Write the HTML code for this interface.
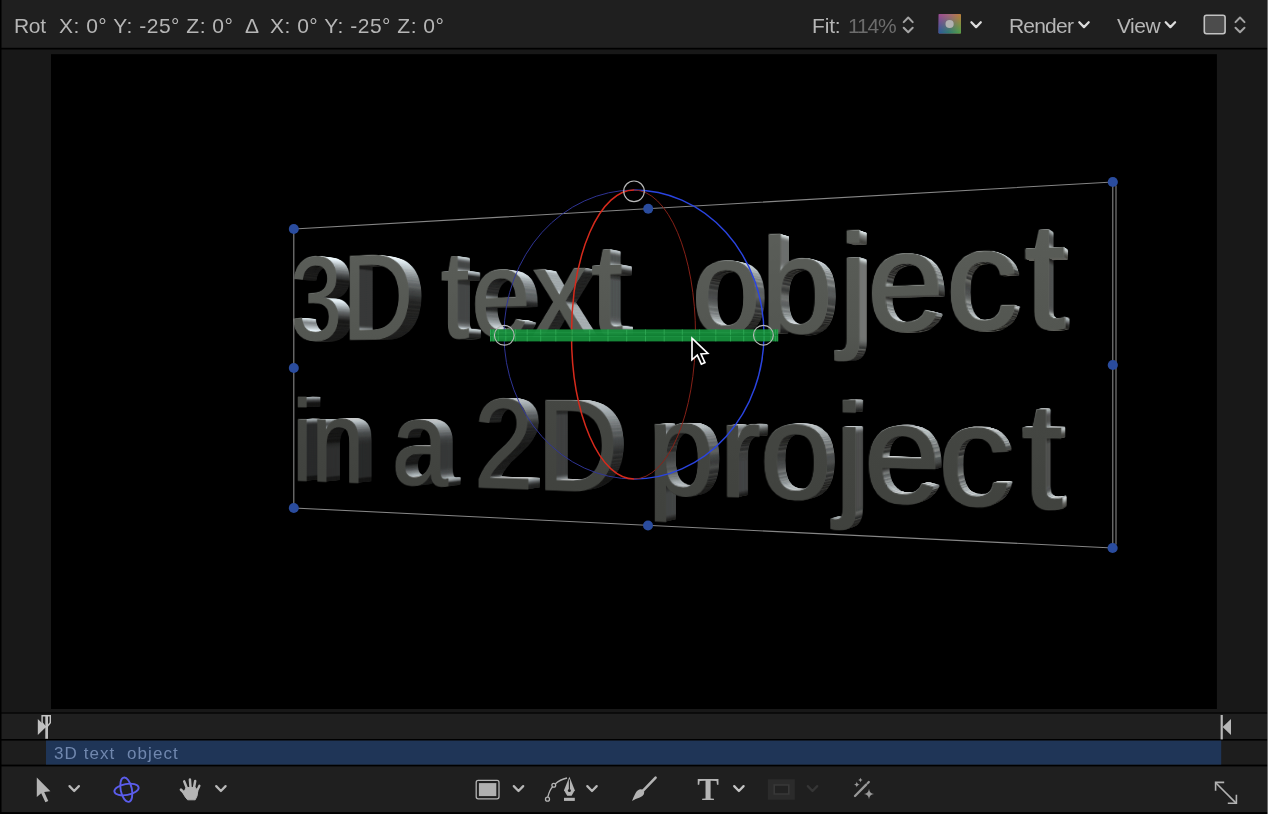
<!DOCTYPE html>
<html><head><meta charset="utf-8"><title>Canvas</title>
<style>
*{box-sizing:border-box;margin:0;padding:0}
html,body{width:1270px;height:814px;overflow:hidden;background:#000;font-family:"Liberation Sans",sans-serif}
#root{position:absolute;left:0;top:0;width:1270px;height:814px;background:#000;overflow:hidden}
#bar{position:absolute;left:46px;top:741px;width:1175px;height:24px;will-change:transform;transform:translateZ(0)}
#bar span{position:absolute;left:8px;top:3.2px;font-size:17px;line-height:20px;color:#7087ae;white-space:pre;letter-spacing:1.08px}
.tt{position:absolute;top:14.2px;font-size:21px;line-height:24px;color:#b6b6b6;white-space:pre;will-change:transform;transform:translateZ(0)}
/* 3D text */
#stage{position:absolute;left:0;top:0;width:1270px;height:814px}
.ly{position:absolute;left:0;top:0;width:1270px;height:814px;overflow:visible;transform-origin:634px 382px}
svg{position:absolute;left:0;top:0;overflow:visible}

</style></head>
<body>
<div id="root">
<svg id="bg" width="1270" height="814" viewBox="0 0 1270 814">
 <rect x="0" y="0" width="1270" height="814" fill="#000"/>
 <rect x="1.5" y="0" width="1266.1" height="47.8" fill="#1f1f1f"/>
 <rect x="1.5" y="49.5" width="1266.1" height="662.9" fill="#181818"/>
 <rect x="1.5" y="712.4" width="1266.1" height="1.6" fill="#0c0c0c"/>
 <rect x="51" y="54.2" width="1165.9" height="654.8" fill="#000"/>
 <rect x="1.5" y="714" width="1266.1" height="25" fill="#1f1f1f"/>
 <rect x="1.5" y="740.6" width="1266.1" height="24" fill="#1d1d1d"/>
 <rect x="46" y="740.6" width="1175.2" height="24" fill="#1f3557"/>
 <rect x="1.5" y="766.4" width="1266.1" height="45.7" fill="#1f1f1f"/>
 <rect x="1267.6" y="0" width="2.4" height="814" fill="#fff"/>
</svg>
<div id="stage">
<svg width="0" height="0" style="position:absolute"><defs>
<g id="w1" font-family="Liberation Sans, sans-serif" font-size="130"><text x="204.4 276.9" y="335.0" transform="translate(0 335.0) scale(1 1.028) translate(0 -335.0)">3D</text><text x="405.5" y="335.0" transform="translate(0 335.0) scale(1 1.032) translate(0 -335.0)">t</text><text x="443.7 517.0" y="335.0">ex</text><text x="585.8" y="335.0" transform="translate(0 335.0) scale(1 1.032) translate(0 -335.0)">t</text><text x="696.0 767.7 844.7 872.1 944.8" y="335.0">objec</text><text x="1013.9" y="335.0" transform="translate(0 335.0) scale(1 1.032) translate(0 -335.0)">t</text><text x="207.5 234.6" y="492.7">in</text><text x="342.7" y="492.7">a</text><text x="447.0 523.0" y="492.7" transform="translate(0 492.7) scale(1 1.028) translate(0 -492.7)">2D</text><text x="648.6 725.1 766.8 841.1 869.0 938.1" y="492.7">projec</text><text x="1011.8" y="492.7" transform="translate(0 492.7) scale(1 1.032) translate(0 -492.7)">t</text></g>
<linearGradient id="amb" gradientUnits="userSpaceOnUse" x1="204" y1="0" x2="1064" y2="0">
 <stop offset="0" stop-color="#1e1e1d"/><stop offset=".45" stop-color="#2c2c2a"/><stop offset=".75" stop-color="#4c4c48"/><stop offset="1" stop-color="#62625c"/></linearGradient>
<filter id="ltA" filterUnits="userSpaceOnUse" x="196" y="222" width="884" height="316" color-interpolation-filters="sRGB">
 <feGaussianBlur in="SourceAlpha" stdDeviation="2.3" result="b"/>
 <feDiffuseLighting in="b" surfaceScale="8.5" diffuseConstant="1.4" lighting-color="#a6afb4" result="d"><feDistantLight azimuth="274" elevation="8"/></feDiffuseLighting>
 <feComposite in="d" in2="SourceGraphic" operator="arithmetic" k1="0" k2="1" k3="1" k4="0" result="sum"/>
 <feComposite in="sum" in2="SourceAlpha" operator="in"/>
</filter>
<filter id="ltB" filterUnits="userSpaceOnUse" x="322" y="222" width="758" height="316" color-interpolation-filters="sRGB">
 <feGaussianBlur in="SourceAlpha" stdDeviation="2.3" result="b"/>
 <feDiffuseLighting in="b" surfaceScale="8.5" diffuseConstant="1" lighting-color="#a3acb1" result="d"><feDistantLight azimuth="282" elevation="36"/></feDiffuseLighting>
 <feComposite in="d" in2="SourceGraphic" operator="arithmetic" k1="0" k2="1" k3="1" k4="0" result="sum"/>
 <feComposite in="sum" in2="SourceAlpha" operator="in"/>
</filter>
<g id="sideA" filter="url(#ltA)"><use href="#w1" fill="url(#amb)"/></g>
<linearGradient id="ambB" gradientUnits="userSpaceOnUse" x1="204" y1="0" x2="1064" y2="0">
 <stop offset="0" stop-color="#222" stop-opacity="0"/><stop offset=".1465" stop-color="#242423" stop-opacity="0"/><stop offset=".45" stop-color="#2c2c2a" stop-opacity=".49"/><stop offset=".75" stop-color="#4c4c48" stop-opacity=".98"/><stop offset=".77" stop-color="#4e4e4a" stop-opacity="1"/><stop offset="1" stop-color="#62625c" stop-opacity="1"/></linearGradient>
<g id="sideB" filter="url(#ltB)"><use href="#w1" fill="url(#ambB)"/></g>
<g id="side"><use href="#sideA"/><use href="#sideB"/><use href="#w1" fill="url(#vdk)"/></g>
<linearGradient id="fg" gradientUnits="userSpaceOnUse" x1="0" y1="230" x2="0" y2="530">
 <stop offset="0" stop-color="#5b5e59"/><stop offset=".36" stop-color="#535651"/><stop offset=".48" stop-color="#4c4e4a"/><stop offset=".56" stop-color="#454743"/><stop offset="1" stop-color="#3f413d"/></linearGradient>
<linearGradient id="vdk" gradientUnits="userSpaceOnUse" x1="0" y1="230" x2="0" y2="530">
 <stop offset="0" stop-color="#000" stop-opacity="0"/><stop offset=".40" stop-color="#000" stop-opacity="0"/><stop offset=".56" stop-color="#000" stop-opacity=".22"/><stop offset="1" stop-color="#000" stop-opacity=".26"/></linearGradient>
<g id="face"><use href="#w1" fill="url(#fg)" stroke="url(#fg)" stroke-width="1" stroke-linejoin="round"/></g>
</defs></svg>
<svg class="ly" width="1270" height="814" style="transform:perspective(1385.5px) rotateY(-25deg) translateZ(-25px)"><use href="#side"/></svg>
<svg class="ly" width="1270" height="814" style="transform:perspective(1385.5px) rotateY(-25deg) translateZ(-24px)"><use href="#side"/></svg>
<svg class="ly" width="1270" height="814" style="transform:perspective(1385.5px) rotateY(-25deg) translateZ(-23px)"><use href="#side"/></svg>
<svg class="ly" width="1270" height="814" style="transform:perspective(1385.5px) rotateY(-25deg) translateZ(-22px)"><use href="#side"/></svg>
<svg class="ly" width="1270" height="814" style="transform:perspective(1385.5px) rotateY(-25deg) translateZ(-21px)"><use href="#side"/></svg>
<svg class="ly" width="1270" height="814" style="transform:perspective(1385.5px) rotateY(-25deg) translateZ(-20px)"><use href="#side"/></svg>
<svg class="ly" width="1270" height="814" style="transform:perspective(1385.5px) rotateY(-25deg) translateZ(-19px)"><use href="#side"/></svg>
<svg class="ly" width="1270" height="814" style="transform:perspective(1385.5px) rotateY(-25deg) translateZ(-18px)"><use href="#side"/></svg>
<svg class="ly" width="1270" height="814" style="transform:perspective(1385.5px) rotateY(-25deg) translateZ(-17px)"><use href="#side"/></svg>
<svg class="ly" width="1270" height="814" style="transform:perspective(1385.5px) rotateY(-25deg) translateZ(-16px)"><use href="#side"/></svg>
<svg class="ly" width="1270" height="814" style="transform:perspective(1385.5px) rotateY(-25deg) translateZ(-15px)"><use href="#side"/></svg>
<svg class="ly" width="1270" height="814" style="transform:perspective(1385.5px) rotateY(-25deg) translateZ(-14px)"><use href="#side"/></svg>
<svg class="ly" width="1270" height="814" style="transform:perspective(1385.5px) rotateY(-25deg) translateZ(-13px)"><use href="#side"/></svg>
<svg class="ly" width="1270" height="814" style="transform:perspective(1385.5px) rotateY(-25deg) translateZ(-12px)"><use href="#side"/></svg>
<svg class="ly" width="1270" height="814" style="transform:perspective(1385.5px) rotateY(-25deg) translateZ(-11px)"><use href="#side"/></svg>
<svg class="ly" width="1270" height="814" style="transform:perspective(1385.5px) rotateY(-25deg) translateZ(-10px)"><use href="#side"/></svg>
<svg class="ly" width="1270" height="814" style="transform:perspective(1385.5px) rotateY(-25deg) translateZ(-9px)"><use href="#side"/></svg>
<svg class="ly" width="1270" height="814" style="transform:perspective(1385.5px) rotateY(-25deg) translateZ(-8px)"><use href="#side"/></svg>
<svg class="ly" width="1270" height="814" style="transform:perspective(1385.5px) rotateY(-25deg) translateZ(-7px)"><use href="#side"/></svg>
<svg class="ly" width="1270" height="814" style="transform:perspective(1385.5px) rotateY(-25deg) translateZ(-6px)"><use href="#side"/></svg>
<svg class="ly" width="1270" height="814" style="transform:perspective(1385.5px) rotateY(-25deg) translateZ(-5px)"><use href="#side"/></svg>
<svg class="ly" width="1270" height="814" style="transform:perspective(1385.5px) rotateY(-25deg) translateZ(-4px)"><use href="#side"/></svg>
<svg class="ly" width="1270" height="814" style="transform:perspective(1385.5px) rotateY(-25deg) translateZ(-3px)"><use href="#side"/></svg>
<svg class="ly" width="1270" height="814" style="transform:perspective(1385.5px) rotateY(-25deg) translateZ(-2px)"><use href="#side"/></svg>
<svg class="ly" width="1270" height="814" style="transform:perspective(1385.5px) rotateY(-25deg) translateZ(-1px)"><use href="#side"/></svg>
<svg class="ly" width="1270" height="814" style="transform:perspective(1385.5px) rotateY(-25deg) translateZ(0px)"><use href="#face"/></svg>
</div>
<div id="bar"><span>3D text  object</span></div>

<!-- top bar text -->
<span class="tt" style="left:14.4px;letter-spacing:-.3px">Rot</span>
<span class="tt" style="left:59px;letter-spacing:.5px">X: 0° Y: -25° Z: 0°</span>
<span class="tt" style="left:245px;letter-spacing:-1px">Δ</span>
<span class="tt" style="left:270px;letter-spacing:.5px">X: 0° Y: -25° Z: 0°</span>
<span class="tt" style="left:811.5px;letter-spacing:-.17px">Fit:</span>
<span class="tt" style="left:847.5px;letter-spacing:-1.16px;color:#6c6c6c">114%</span>
<span class="tt" style="left:1008.5px;letter-spacing:-.8px">Render</span>
<span class="tt" style="left:1116.5px;letter-spacing:-.53px">View</span>

<svg id="ui" width="1270" height="814" viewBox="0 0 1270 814">
<defs>
 <path id="chev" d="M-4.7-2.5 L0 2.4 L4.7-2.5" fill="none" stroke-width="2.25" stroke-linecap="round" stroke-linejoin="round"/>
 <g id="updn" fill="none" stroke-width="2" stroke-linecap="round" stroke-linejoin="round"><path d="M-4.5-2.8 L0-7.4 L4.5-2.8"/><path d="M-4.5 2.8 L0 7.4 L4.5 2.8"/></g>
 <linearGradient id="swt" x1="0" y1="0" x2="1" y2="0"><stop offset="0" stop-color="#9a4a92"/><stop offset=".45" stop-color="#a0667a"/><stop offset="1" stop-color="#b8803a"/></linearGradient>
 <linearGradient id="swb" x1="0" y1="0" x2="1" y2="0"><stop offset="0" stop-color="#2a5c9a"/><stop offset=".45" stop-color="#2e7a72"/><stop offset="1" stop-color="#52a048"/></linearGradient>
 <linearGradient id="swf" x1="0" y1="0" x2="0" y2="1"><stop offset="0.1" stop-color="#fff" stop-opacity="0"/><stop offset=".9" stop-color="#fff" stop-opacity="1"/></linearGradient>
 <mask id="swm"><rect x="938" y="13" width="24" height="22" fill="url(#swf)"/></mask>
</defs>

<!-- top bar icons -->
<use href="#updn" x="908.2" y="24.9" stroke="#a4a4a4"/>
<rect x="938.5" y="14" width="22.5" height="19.6" rx=".8" fill="url(#swt)"/>
<rect x="938.5" y="14" width="22.5" height="19.6" rx=".8" fill="url(#swb)" mask="url(#swm)"/>
<circle cx="949.6" cy="24" r="4.1" fill="#b2b2b2"/>
<use href="#chev" x="976.1" y="24.7" stroke="#dcdcdc"/>
<use href="#chev" x="1084" y="24.7" stroke="#dcdcdc"/>
<use href="#chev" x="1170.4" y="24.7" stroke="#dcdcdc"/>
<rect x="1204.3" y="15.3" width="20.8" height="18.4" rx="2.2" fill="#4c4c4c" stroke="#c2c2c2" stroke-width="1.6"/>
<use href="#updn" x="1240" y="24.9" stroke="#a4a4a4"/>

<!-- mini timeline markers -->
<g fill="#c0c0c0">
 <path d="M37.8 719 L46 727 L37.8 735 Z"/>
 <rect x="45.3" y="716" width="2.7" height="22.8"/>
 <path d="M42.1 715.7 h8.2 v7 l-3.2 4 h-1.8 l-3.2 -4 z" fill="none" stroke="#c4c4c4" stroke-width="1.4"/>
 <rect x="1220.6" y="715" width="2.2" height="24.4" fill="#b8b8b8"/>
 <path d="M1231 719 L1222.6 727 L1231 735 Z" fill="#b8b8b8"/>
</g>

<!-- bottom tools -->
<g id="tools-icons">
 <!-- arrow -->
 <path d="M36.8 777.6 L36.8 797 L41.2 793.2 L45.4 802.3 L48.3 801 L44.2 792 L50.4 791.2 Z" fill="#b4b4b4"/>
 <use href="#chev" x="74.2" y="788.6" stroke="#b8b8b8"/>
 <!-- orbit -->
 <g fill="none" stroke="#5b5dec" stroke-width="1.9">
  <ellipse cx="126.5" cy="789.5" rx="12.3" ry="5.5" transform="rotate(-10 126.5 789.5)"/>
  <ellipse cx="126.3" cy="789.7" rx="5.6" ry="12.4" transform="rotate(-12 126.3 789.7)"/>
 </g>
 <!-- hand -->
 <g fill="#b4b4b4" stroke="#b4b4b4" stroke-linecap="round" stroke-linejoin="round">
  <path d="M185.8 794.4 L181 789.8" stroke-width="2.7"/>
  <path d="M187.4 789.5 L184.2 781.4" stroke-width="2.5"/>
  <path d="M190.6 788.5 L189.9 779.4" stroke-width="2.5"/>
  <path d="M193.8 788.8 L195.2 781" stroke-width="2.5"/>
  <path d="M196.6 792 L199.4 785.8" stroke-width="2.3"/>
  <path d="M184.4 791 L186.2 787.6 L195.4 787.4 L197.8 791 Q197.6 796.6 195.2 799.8 L187.6 799.8 Q184.8 797 182.6 792.4 Z" stroke-width="1"/>
 </g>
 <use href="#chev" x="220.9" y="788.6" stroke="#b8b8b8"/>
 <!-- rectangle tool -->
 <rect x="476.2" y="780.4" width="22.8" height="18.4" rx="2" fill="none" stroke="#b4b4b4" stroke-width="1.3"/>
 <rect x="478.9" y="783.1" width="17.4" height="13" fill="#b0b0b0"/>
 <use href="#chev" x="518.5" y="788.6" stroke="#b8b8b8"/>
 <!-- bezier pen -->
 <g fill="none" stroke="#b4b4b4" stroke-width="1.3">
  <path d="M547.8 797 Q550 789 553 786.6"/>
  <path d="M555.2 784 Q560 779.5 567 778"/>
  <circle cx="547.5" cy="799.2" r="2"/>
  <circle cx="553.8" cy="785.3" r="1.9"/>
 </g>
 <path d="M569.4 776.8 L574.8 790.3 L571.6 795.8 L567.2 795.8 L564 790.3 Z" fill="#b4b4b4"/>
 <path d="M569.4 779.5 L569.4 789.6" stroke="#1f1f1f" stroke-width="1.1"/>
 <circle cx="569.4" cy="790.6" r="1.5" fill="#1f1f1f"/>
 <rect x="564" y="797.8" width="10.8" height="3.1" fill="#b4b4b4"/>
 <use href="#chev" x="592" y="788.6" stroke="#b8b8b8"/>
 <!-- brush -->
 <path d="M655.6 777.6 L642.6 791.2" stroke="#b4b4b4" stroke-width="2.6" stroke-linecap="round"/>
 <path d="M643.6 790 Q646 794.6 639.8 797.4 Q635.5 798.6 632 801 Q633.8 796.4 635.6 793 Q638.8 787.6 643.6 790 Z" fill="#b4b4b4"/>
 <!-- T -->
 <text x="697.2" y="800.3" font-family="Liberation Serif" font-weight="bold" font-size="32.5" fill="#b4b4b4">T</text>
 <use href="#chev" x="738.9" y="788.6" stroke="#c4c4c4"/>
 <!-- dim mask tool -->
 <rect x="767.8" y="779.3" width="27" height="20.4" fill="#2b2b2b"/>
 <rect x="774.2" y="785" width="14.6" height="9" fill="#222" stroke="#383838" stroke-width="1.6"/>
 <use href="#chev" x="812.5" y="788.6" stroke="#353535"/>
 <!-- magic wand -->
 <g fill="#989898" stroke="none">
  <path d="M855 796 L866.2 784.6" stroke="#989898" stroke-width="2.3" stroke-linecap="round"/>
  <path d="M867.6 783.2 L868.8 782" stroke="#989898" stroke-width="2.3" stroke-linecap="round"/>
  <path d="M869 788.8 Q869.5 793.5 874 794 Q869.5 794.5 869 799.2 Q868.5 794.5 864 794 Q868.5 793.5 869 788.8 Z"/>
  <path d="M856.8 781.4 Q857.1 784.2 859.9 784.5 Q857.1 784.8 856.8 787.6 Q856.5 784.8 853.7 784.5 Q856.5 784.2 856.8 781.4 Z"/>
  <path d="M860.4 777.8 Q860.6 779.8 862.6 780 Q860.6 780.2 860.4 782.2 Q860.2 780.2 858.2 780 Q860.2 779.8 860.4 777.8 Z"/>
 </g>
 <!-- expand -->
 <g fill="none" stroke="#b2b2b2" stroke-width="1.6" stroke-linecap="square">
  <path d="M1216 783 L1236 803"/>
  <path d="M1215.6 790 L1215.6 782.4 L1223.4 782.4"/>
  <path d="M1228.6 803.2 L1236.4 803.2 L1236.4 795.6"/>
 </g>
</g>

<!-- canvas overlays: bounding box -->
<g id="bbox" fill="none" stroke="#868686" stroke-width="1.1">
 <path d="M293.8 229 L1112.8 182 L1112.8 548 L293.8 508 Z"/>
 <path d="M1116 185.4 L1116 544.5"/>
</g>
<g fill="#2a4c9e">
 <circle cx="293.8" cy="229" r="5"/><circle cx="648.2" cy="208.8" r="5"/><circle cx="1112.8" cy="182" r="5.1"/>
 <circle cx="293.8" cy="368" r="5"/><circle cx="1112.8" cy="365" r="5.1"/>
 <circle cx="293.8" cy="508" r="5"/><circle cx="648" cy="525.5" r="5"/><circle cx="1112.6" cy="548" r="5.1"/>
</g>

<!-- rotation gizmo -->
<g id="gizmo" fill="none">
 <path d="M634 190 A130 144.5 0 0 0 634 479" stroke="#30369a" stroke-width=".95"/>
 <path d="M634 190 A130 144.5 0 0 1 634 479" stroke="#2a44e0" stroke-width="1.45"/>
 <path d="M634 190 A61.5 144.5 0 0 1 634 479" stroke="#8c2218" stroke-width=".95"/>
 <path d="M634 190 A62.5 144.5 0 0 0 634 479" stroke="#d62a1c" stroke-width="1.5"/>
 <rect x="490" y="329.4" width="288" height="12" fill="#168f3c" opacity=".94"/>
 <path d="M490.5 329.4V341.4 M493.2 329.4V341.4 M498.3 329.4V341.4 M505.8 329.4V341.4 M515.5 329.4V341.4 M527.2 329.4V341.4 M540.7 329.4V341.4 M555.8 329.4V341.4 M572.2 329.4V341.4 M589.7 329.4V341.4 M608.0 329.4V341.4 M626.7 329.4V341.4 M645.5 329.4V341.4 M664.2 329.4V341.4 M682.3 329.4V341.4 M699.6 329.4V341.4 M715.8 329.4V341.4 M730.5 329.4V341.4 M743.7 329.4V341.4 M754.9 329.4V341.4 M764.1 329.4V341.4 M771.0 329.4V341.4 M775.6 329.4V341.4 M777.8 329.4V341.4" stroke="#38b45e" stroke-width=".9" opacity=".75"/>
 <path d="M490 335.3 H778" stroke="#0f7a32" stroke-width=".9" opacity=".8"/><path d="M490 336.6 H778 M490 332.6 H778" stroke="#2aa650" stroke-width=".6" opacity=".6"/>
 <g stroke="#b8b8b8" stroke-width="1.15">
  <circle cx="634" cy="191.3" r="10.3"/><circle cx="504.3" cy="335.3" r="9.9"/><circle cx="763.4" cy="335.2" r="9.9"/>
 </g>
</g>
<!-- cursor -->
<g id="cursor" transform="translate(692 338.2) scale(1.32 1.27)">
 <path d="M0 0 L0 17 L4 13.3 L7.1 20.4 L9.8 19.2 L6.8 12.4 L12 12 Z" fill="#000" stroke="#fff" stroke-width="1.25" stroke-linejoin="miter"/>
</g>
</svg>
</div>

</body></html>
